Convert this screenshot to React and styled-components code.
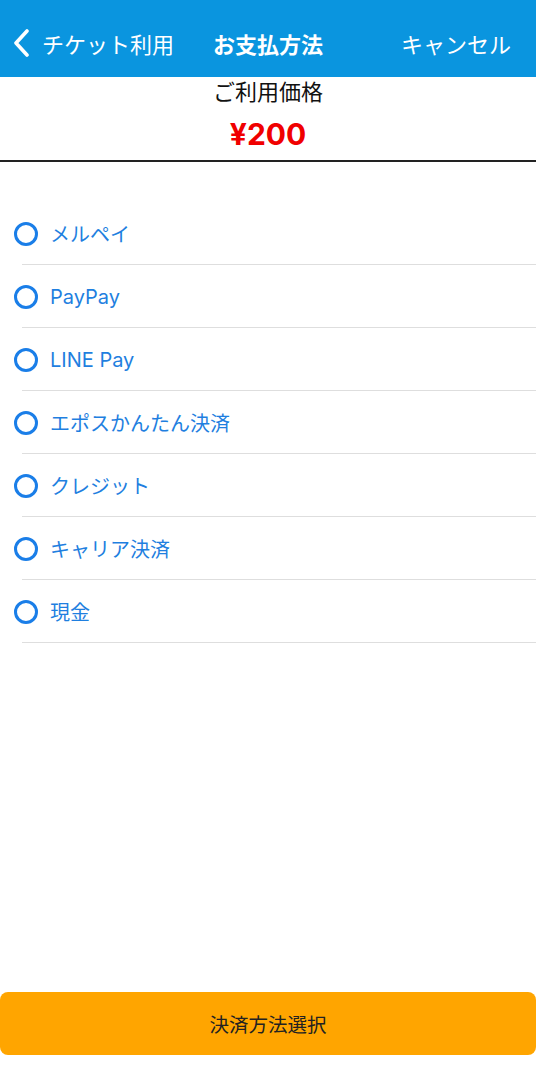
import React from "react";
import styled, { createGlobalStyle } from "styled-components";

const Global = createGlobalStyle`
  html, body { margin: 0; padding: 0; background: #fff; }
  body { font-family: Inter, "Noto Sans CJK JP", sans-serif; }
  * { box-sizing: border-box; }
`;

const Page = styled.div`
  height: 1080px;
  display: flex;
  flex-direction: column;
  background: #fff;
`;

const Header = styled.header`
  height: 77px;
  padding-top: 9px;
  background: #0a95df;
  color: #fff;
  display: grid;
  grid-template-columns: 1fr auto 1fr;
  align-items: center;
  font-size: 22px;
`;

const Back = styled.div`
  display: flex;
  align-items: center;
  gap: 12px;
  padding-left: 12px;
`;

const Title = styled.div`
  font-weight: 700;
`;

const Cancel = styled.div`
  justify-self: end;
  padding-right: 25px;
`;

const PriceBox = styled.section`
  display: flex;
  flex-direction: column;
  align-items: center;
  border-bottom: 2px solid #222;
  padding-top: 0;
  height: 85px;
`;

const PriceLabel = styled.div`
  font-size: 22px;
  line-height: 30px;
  color: #111;
`;

const PriceValue = styled.div`
  font-size: 30px;
  font-weight: 700;
  line-height: 40px;
  margin-top: 7px;
  color: #f00000;
`;

const List = styled.ul`
  list-style: none;
  margin: 40px 0 0;
  padding: 0;
`;

const Item = styled.li`
  display: flex;
  align-items: center;
  gap: 12px;
  height: 63px;
  padding-left: 14px;
  position: relative;
  color: #1f7fe0;
  font-size: 20px;
  &::after {
    content: "";
    position: absolute;
    left: 22px;
    right: 0;
    bottom: 0;
    height: 1px;
    background: #dedede;
  }
`;

const Radio = styled.span`
  width: 24px;
  height: 24px;
  border-radius: 50%;
  border: 3px solid #1a7ee8;
  flex: none;
`;

const Spacer = styled.div`
  flex: 1;
`;

const Button = styled.button`
  height: 63px;
  margin: 0 0 25px;
  border: none;
  border-radius: 8px;
  background: #ffa500;
  color: #222;
  font-family: inherit;
  font-size: 19.5px;
  width: 100%;
`;

const methods = [
  "メルペイ",
  "PayPay",
  "LINE Pay",
  "エポスかんたん決済",
  "クレジット",
  "キャリア決済",
  "現金",
];

export default function App() {
  return (
    <Page>
      <Global />
      <Header>
        <Back>
          <svg width="18" height="28" viewBox="0 0 18 28">
            <polyline
              points="15,2 4,14 15,26"
              fill="none"
              stroke="#fff"
              strokeWidth="3.6"
              strokeLinecap="round"
              strokeLinejoin="round"
            />
          </svg>
          <span>チケット利用</span>
        </Back>
        <Title>お支払方法</Title>
        <Cancel>キャンセル</Cancel>
      </Header>
      <PriceBox>
        <PriceLabel>ご利用価格</PriceLabel>
        <PriceValue>¥200</PriceValue>
      </PriceBox>
      <List>
        {methods.map((m) => (
          <Item key={m}>
            <Radio />
            <span>{m}</span>
          </Item>
        ))}
      </List>
      <Spacer />
      <Button>決済方法選択</Button>
    </Page>
  );
}
